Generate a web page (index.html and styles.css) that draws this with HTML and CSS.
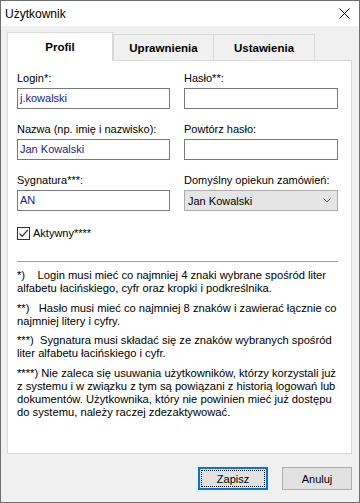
FILE: index.html
```html
<!DOCTYPE html>
<html lang="pl">
  <head>
    <meta charset="UTF-8" />
    <meta name="viewport" content="width=device-width, initial-scale=1.0" />
    <title>Użytkownik</title>
    <link rel="stylesheet" href="styles.css">
  </head>
  <body>
    <div class="okno">
      <div class="pasek">
        <span class="tytul">Użytkownik</span>
        <svg class="zamknij" width="11" height="11" viewBox="0 0 11 11">
          <path d="M0.5 0.5 L10.5 10.5 M10.5 0.5 L0.5 10.5" stroke="#000" stroke-width="1" fill="none" />
        </svg>
      </div>

      <nav class="zakladki">
        <div class="zakladka aktywna">Profil</div>
        <div class="zakladka">Uprawnienia</div>
        <div class="zakladka">Ustawienia</div>
      </nav>

      <section class="panel">
        <div class="pola">
          <div class="pole">
            <label>Login*:</label>
            <div class="wejscie">j.kowalski</div>
          </div>
          <div class="pole">
            <label>Hasło**:</label>
            <div class="wejscie"></div>
          </div>
          <div class="pole">
            <label>Nazwa (np. imię i nazwisko):</label>
            <div class="wejscie">Jan Kowalski</div>
          </div>
          <div class="pole">
            <label>Powtórz hasło:</label>
            <div class="wejscie"></div>
          </div>
          <div class="pole">
            <label>Sygnatura***:</label>
            <div class="wejscie">AN</div>
          </div>
          <div class="pole">
            <label>Domyślny opiekun zamówień:</label>
            <div class="lista">
              <span>Jan Kowalski</span>
              <svg width="8" height="5" viewBox="0 0 8 5">
                <path d="M0.5 0.5 L4 4 L7.5 0.5" stroke="#555" stroke-width="1" fill="none" />
              </svg>
            </div>
          </div>
        </div>

        <div class="aktywny">
          <span class="kratka">
            <svg width="11" height="11" viewBox="0 0 11 11">
              <path d="M1.5 5.5 L4.2 8.2 L9.8 2" stroke="#444" stroke-width="1.3" fill="none" />
            </svg>
          </span>
          Aktywny****
        </div>

        <hr />

        <div class="uwagi">
          <p>*)&nbsp;&nbsp;&nbsp;&nbsp;Login musi mieć co najmniej 4 znaki wybrane spośród liter<br>alfabetu łacińskiego, cyfr oraz kropki i podkreślnika.</p>
          <p>**)&nbsp;&nbsp;&nbsp;Hasło musi mieć co najmniej 8 znaków i zawierać łącznie co<br>najmniej litery i cyfry.</p>
          <p>***)&nbsp;&nbsp;Sygnatura musi składać się ze znaków wybranych spośród<br>liter alfabetu łacińskiego i cyfr.</p>
          <p>****) Nie zaleca się usuwania użytkowników, którzy korzystali już<br>z systemu i w związku z tym są powiązani z historią logowań lub<br>dokumentów. Użytkownika, który nie powinien mieć już dostępu<br>do systemu, należy raczej zdezaktywować.</p>
        </div>
      </section>

      <div class="przyciski">
        <button class="przycisk domyslny"><span>Zapisz</span></button>
        <button class="przycisk"><span>Anuluj</span></button>
      </div>
    </div>
  </body>
</html>
```

FILE: styles.css
```css
body {
  margin: 0;
}

.okno {
  box-sizing: border-box;
  width: 360px;
  height: 503px;
  border: 1px solid #6d6d6d;
  background-color: #f0f0f0;
  font-family: "Liberation Sans", Arial, sans-serif;
  font-size: 11px;
  color: #000;
}

.pasek {
  height: 25px;
  background-color: #fff;
  display: flex;
  align-items: center;
  justify-content: space-between;
  padding: 0 9px 0 4px;
}

.tytul {
  font-size: 12px;
  color: #000;
}

.zakladki {
  display: flex;
  align-items: flex-end;
  margin: 6px 0 0 6px;
}

.zakladka {
  box-sizing: border-box;
  width: 101px;
  height: 26px;
  border: 1px solid #d9d9d9;
  border-bottom: none;
  display: flex;
  align-items: center;
  justify-content: center;
  font-weight: bold;
  font-size: 11.5px;
  color: #000;
}

.zakladka + .zakladka + .zakladka {
  margin-left: -1px;
  width: 102px;
}

.aktywna {
  position: relative;
  z-index: 1;
  width: 106px;
  height: 29px;
  margin-bottom: -1px;
  padding-bottom: 1px;
  background-color: #fff;
}

.panel {
  box-sizing: border-box;
  height: 394px;
  margin: 0 7px 0 6px;
  padding: 11px 13px 0 9px;
  border: 1px solid #d9d9d9;
  background-color: #fff;
}

.pola {
  display: grid;
  grid-template-columns: 153px 154px;
  column-gap: 14px;
  row-gap: 14px;
}

.pole label {
  display: block;
  line-height: 13px;
  margin-bottom: 3px;
}

.wejscie {
  box-sizing: border-box;
  height: 21px;
  border: 1px solid #7a7a7a;
  padding: 0 2px;
  line-height: 19px;
  color: #1c1c8c;
}

.lista {
  box-sizing: border-box;
  height: 21px;
  border: 1px solid #adadad;
  background-color: #e5e5e5;
  padding: 0 6px 0 3px;
  display: flex;
  align-items: center;
  justify-content: space-between;
}

.aktywny {
  display: flex;
  align-items: center;
  gap: 3px;
  margin-top: 16px;
  line-height: 13px;
}

.kratka {
  box-sizing: border-box;
  width: 13px;
  height: 13px;
  border: 1px solid #333;
  display: flex;
  align-items: center;
  justify-content: center;
}

hr {
  border: none;
  border-top: 1px solid #a0a0a0;
  margin: 21px 0 0 0;
}

.uwagi {
  margin-top: 7px;
  white-space: nowrap;
  font-size: 11.2px;
}

.uwagi p {
  margin: 0 0 6.5px 0;
  line-height: 13px;
}

.przyciski {
  display: flex;
  justify-content: flex-end;
  gap: 14px;
  padding: 13px 7px 0 0;
}

.przycisk {
  box-sizing: border-box;
  width: 70px;
  height: 23px;
  border: 1px solid #adadad;
  background-color: #e1e1e1;
  font-family: "Liberation Sans", Arial, sans-serif;
  font-size: 11px;
  color: #000;
  padding: 0;
}

.domyslny {
  border: 2px solid #0078d7;
  padding: 1px;
}

.domyslny span {
  box-sizing: border-box;
  display: flex;
  align-items: center;
  justify-content: center;
  height: 100%;
  border: 1px dotted #000;
}
```
